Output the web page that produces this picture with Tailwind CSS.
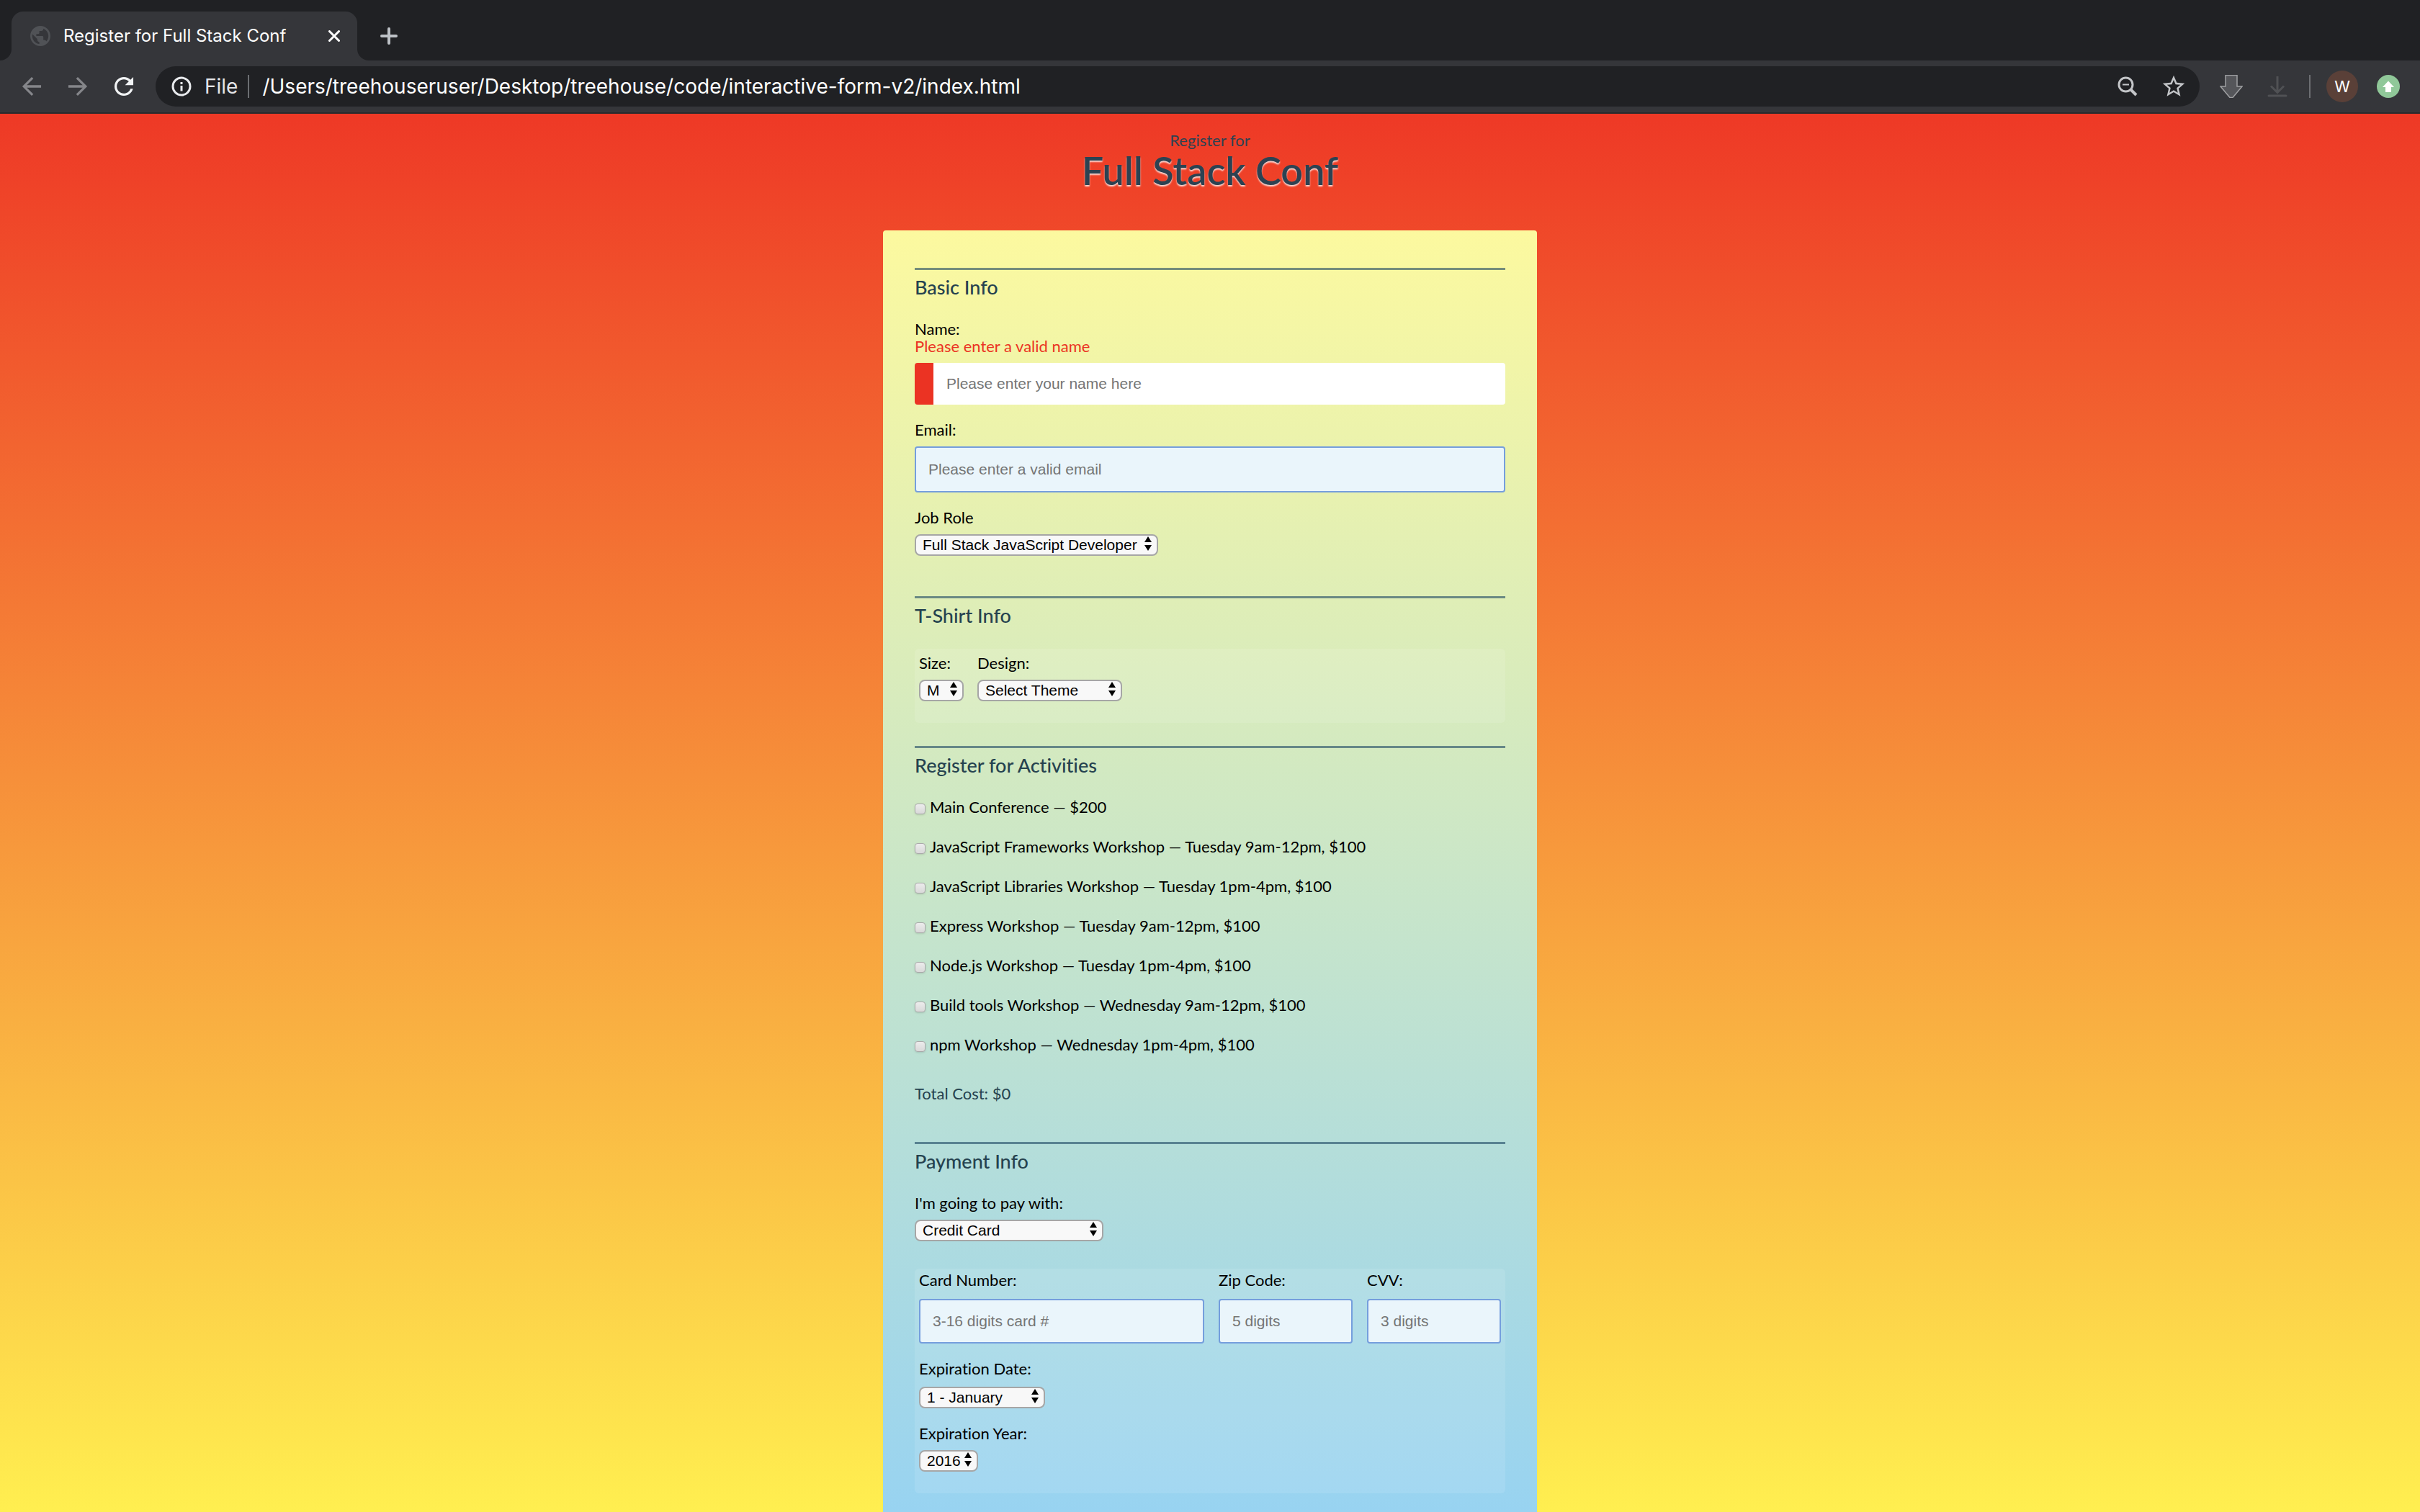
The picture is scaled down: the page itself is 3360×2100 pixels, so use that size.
<!DOCTYPE html>
<html lang="en">
<head>
<meta charset="utf-8">
<meta name="viewport" content="width=device-width, initial-scale=1">
<title>Register for Full Stack Conf</title>
<script src="https://cdn.jsdelivr.net/npm/@tailwindcss/browser@4"></script>
</head>
<body class="flex min-h-screen flex-col bg-[#202124] text-black">

<!-- Tab strip -->
<div class="flex h-[84px] items-end bg-[#202124] px-4 font-['Inter',sans-serif]">
  <div class="relative flex h-[68px] w-[480px] items-center rounded-t-2xl bg-[#35363a] pr-6 pl-[26px]">
    <svg class="absolute bottom-0 -left-4 size-4" viewBox="0 0 16 16" fill="#35363a" aria-hidden="true"><path d="M16 0v16H0A16 16 0 0 0 16 0z"/></svg>
    <svg class="absolute -right-4 bottom-0 size-4" viewBox="0 0 16 16" fill="#35363a" aria-hidden="true"><path d="M0 0v16h16A16 16 0 0 1 0 0z"/></svg>
    <svg class="size-7" viewBox="2 2 20 20" fill="#505256" aria-hidden="true"><path d="M12 2C6.48 2 2 6.48 2 12s4.48 10 10 10 10-4.48 10-10S17.52 2 12 2zm-1 17.93c-3.95-.49-7-3.85-7-7.93 0-.62.08-1.21.21-1.79L9 15v1c0 1.1.9 2 2 2v1.93zm6.9-2.54c-.26-.81-1-1.39-1.9-1.39h-1v-3c0-.55-.45-1-1-1H8v-2h2c.55 0 1-.45 1-1V7h2c1.1 0 2-.9 2-2v-.41c2.93 1.19 5 4.06 5 7.41 0 2.08-.8 3.97-2.1 5.39z"/></svg>
    <span class="ml-[18px] flex-1 text-2xl whitespace-nowrap text-white">Register for Full Stack Conf</span>
    <button type="button" aria-label="Close tab"><svg class="size-4" viewBox="0 0 16 16" fill="none" stroke="#fff" stroke-width="3" stroke-linecap="round"><path d="M1.5 1.5l13 13M14.5 1.5l-13 13"/></svg></button>
  </div>
  <button type="button" aria-label="New tab" class="ml-8 flex h-[68px] items-center"><svg class="size-6" viewBox="0 0 24 24" fill="none" stroke="#bdc1c6" stroke-width="4" stroke-linecap="round"><path d="M12 2v20M2 12h20"/></svg></button>
</div>

<!-- Toolbar -->
<div class="flex h-[74px] items-center border-b-2 border-[#28292c] bg-[#35363a] px-7 font-['Inter',sans-serif]">
  <div class="flex items-center gap-8">
    <button type="button" aria-label="Back"><svg class="size-8" viewBox="2.2 2.2 19.6 19.6" fill="#85868a"><path d="M20 11H7.83l5.59-5.59L12 4l-8 8 8 8 1.41-1.41L7.83 13H20v-2z"/></svg></button>
    <button type="button" aria-label="Forward"><svg class="size-8" viewBox="2.2 2.2 19.6 19.6" fill="#85868a"><path d="M12 4l-1.41 1.41L16.17 11H4v2h12.17l-5.58 5.59L12 20l8-8z"/></svg></button>
    <button type="button" aria-label="Reload"><svg class="size-8" viewBox="2.2 2.2 19.6 19.6" fill="#f1f3f4"><path d="M17.65 6.35C16.2 4.9 14.21 4 12 4c-4.42 0-7.99 3.58-7.99 8s3.57 8 7.99 8c3.73 0 6.84-2.55 7.73-6h-2.08c-.82 2.33-3.04 4-5.65 4-3.31 0-6-2.69-6-6s2.69-6 6-6c1.66 0 3.14.69 4.22 1.78L13 11h7V4l-2.35 2.35z"/></svg></button>
  </div>
  <div class="ml-7 flex h-14 flex-1 items-center rounded-full bg-[#202124] pr-5 pl-[22px]">
    <svg class="size-7" viewBox="0 0 28 28" fill="none" stroke="#e8eaed" stroke-width="3" aria-hidden="true"><circle cx="14" cy="14" r="12"/><path d="M14 13v7.500M14 8v3"/></svg>
    <label for="url" class="ml-[18px] text-[28px] text-[#e4e5e8]">File</label>
    <span class="ml-3.5 h-8 w-0.5 bg-[#6c6e72]"></span>
    <input id="url" type="text" value="/Users/treehouseruser/Desktop/treehouse/code/interactive-form-v2/index.html" class="ml-[18px] flex-1 bg-transparent text-[28px] text-white outline-none">
    <button type="button" aria-label="Zoom"><svg class="size-7" viewBox="0 0 28 28" fill="none" stroke="#c3c5c8" stroke-width="3"><circle cx="11.500" cy="11.500" r="9.500"/><path d="M18.500 18.500l7.500 7.500" stroke-width="4"/><path d="M7 11.500h9" stroke-width="2"/></svg></button>
    <button type="button" aria-label="Bookmark this page" class="ml-[34px]"><svg class="size-8" viewBox="1.5 1.500 21 21" fill="#c3c5c8"><path d="M22 9.240l-7.190-.62L12 2 9.190 8.630 2 9.240l5.460 4.730L5.820 21 12 17.270 18.180 21l-1.630-7.030L22 9.240zM12 15.400l-3.760 2.270 1-4.280-3.320-2.880 4.380-.38L12 6.100l1.710 4.040 4.380.38-3.320 2.880 1 4.280L12 15.400z"/></svg></button>
  </div>
  <button type="button" aria-label="Downloader" class="ml-7"><svg class="size-8" viewBox="0 0 32 32" fill="#55565a" stroke="#9fa0a2" stroke-width="1.500"><path d="M8 .5h16V16h7L18 31.500h-4L1 16h7z"/></svg></button>
  <button type="button" aria-label="Save" class="ml-8"><svg class="size-8" viewBox="0 0 32 32" fill="none" stroke="#505154" stroke-width="3"><path d="M16 2v22M7 15.500l9 9 9-9" /><path d="M4 29h24" stroke-linecap="round"/></svg></button>
  <span class="ml-7 h-8 w-0.5 bg-[#6c6e72]"></span>
  <button type="button" aria-label="Profile" class="ml-[22px] flex size-11 items-center justify-center rounded-full bg-[#5a4038] text-[22px] text-white">W</button>
  <button type="button" aria-label="Update" class="ml-[26px]"><svg class="size-8" viewBox="0 0 32 32"><circle cx="16" cy="16" r="16" fill="#90c899"/><path d="M16 8.500l8 8.500h-4v7h-8v-7H8z" fill="#fff"/></svg></button>
</div>

<!-- Page -->
<main class="flex flex-1 flex-col items-center bg-linear-to-b/srgb from-[#ee3926] to-[#ffef50] pt-[25px] font-['Lato','Noto_Sans',sans-serif] text-[22px] leading-6 [font-variant-ligatures:none]">
  <header class="text-center text-[#2c4252]">
    <p>Register for</p>
    <h1 class="mt-0.5 text-[54px] leading-14 font-semibold [text-shadow:0_2px_2px_rgba(255,255,255,0.8)]">Full Stack Conf</h1>
  </header>

  <form class="mt-[55px] w-full max-w-[908px] flex-1 rounded-t-sm bg-linear-to-b/srgb from-[#fcf99f] to-[#98d3f1] px-11 pt-[52px] pb-[26px]">

    <section class="border-t-3 border-[#1d4660]/60 pt-2">
      <h2 class="text-[27px] leading-8 font-medium text-[#25424f]">Basic Info</h2>
      <label for="name" class="mt-[30px] block">Name:</label>
      <p class="text-[#eb3323]">Please enter a valid name</p>
      <input id="name" type="text" placeholder="Please enter your name here" class="mt-[11px] block h-[58px] w-full rounded-sm border-l-[26px] border-[#eb3323] bg-white px-[18px] font-['Liberation_Sans',sans-serif] text-[21px] placeholder:text-[#757575]">
      <label for="mail" class="mt-[23px] block">Email:</label>
      <input id="mail" type="email" placeholder="Please enter a valid email" class="mt-[11px] block h-16 w-full rounded-sm border-2 border-[#759edd] bg-[#eaf5fb] px-[17px] font-['Liberation_Sans',sans-serif] text-[21px] placeholder:text-[#757575]">
      <label for="role" class="mt-[23px] block">Job Role</label>
      <div class="relative mt-[11px] w-[338px]">
        <select id="role" class="block h-[30px] w-full appearance-none rounded-lg border-2 border-[#a6a6a6] bg-[#f8f8f8] pl-[9px] font-['Liberation_Sans',sans-serif] text-[21px] leading-[26px]"><option>Full Stack JavaScript Developer</option></select>
        <svg class="pointer-events-none absolute top-[3px] right-[9px] h-5 w-2.5" viewBox="0 0 10 20" aria-hidden="true"><path d="M5 0l5 8H0zM0 12h10l-5 8z"/></svg>
      </div>
    </section>

    <section class="mt-14 border-t-3 border-[#1d4660]/60 pt-2">
      <h2 class="text-[27px] leading-8 font-medium text-[#25424f]">T-Shirt Info</h2>
      <div class="mt-[30px] flex gap-[19px] rounded-md bg-white/10 px-1.5 pt-2 pb-[30px]">
        <div>
          <label for="size" class="block">Size:</label>
          <div class="relative mt-[11px] w-[62px]">
            <select id="size" class="block h-[30px] w-full appearance-none rounded-lg border-2 border-[#a6a6a6] bg-[#f8f8f8] pl-[9px] font-['Liberation_Sans',sans-serif] text-[21px] leading-[26px]"><option>M</option></select>
            <svg class="pointer-events-none absolute top-[3px] right-[9px] h-5 w-2.5" viewBox="0 0 10 20" aria-hidden="true"><path d="M5 0l5 8H0zM0 12h10l-5 8z"/></svg>
          </div>
        </div>
        <div>
          <label for="design" class="block">Design:</label>
          <div class="relative mt-[11px] w-[201px]">
            <select id="design" class="block h-[30px] w-full appearance-none rounded-lg border-2 border-[#a6a6a6] bg-[#f8f8f8] pl-[9px] font-['Liberation_Sans',sans-serif] text-[21px] leading-[26px]"><option>Select Theme</option></select>
            <svg class="pointer-events-none absolute top-[3px] right-[9px] h-5 w-2.5" viewBox="0 0 10 20" aria-hidden="true"><path d="M5 0l5 8H0zM0 12h10l-5 8z"/></svg>
          </div>
        </div>
      </div>
    </section>

    <section class="mt-8 border-t-3 border-[#1d4660]/60 pt-2">
      <h2 class="text-[27px] leading-8 font-medium text-[#25424f]">Register for Activities</h2>
      <div class="mt-[30px] flex flex-col items-start gap-[31px]">
        <label class="flex items-center gap-1.5"><input type="checkbox" class="mt-1 size-[15px] appearance-none rounded-[4px] border border-[#a9a9a9] bg-linear-to-b from-[#ececec] to-[#d9d9d9] shadow-sm">Main Conference — $200</label>
        <label class="flex items-center gap-1.5"><input type="checkbox" class="mt-1 size-[15px] appearance-none rounded-[4px] border border-[#a9a9a9] bg-linear-to-b from-[#ececec] to-[#d9d9d9] shadow-sm">JavaScript Frameworks Workshop — Tuesday 9am-12pm, $100</label>
        <label class="flex items-center gap-1.5"><input type="checkbox" class="mt-1 size-[15px] appearance-none rounded-[4px] border border-[#a9a9a9] bg-linear-to-b from-[#ececec] to-[#d9d9d9] shadow-sm">JavaScript Libraries Workshop — Tuesday 1pm-4pm, $100</label>
        <label class="flex items-center gap-1.5"><input type="checkbox" class="mt-1 size-[15px] appearance-none rounded-[4px] border border-[#a9a9a9] bg-linear-to-b from-[#ececec] to-[#d9d9d9] shadow-sm">Express Workshop — Tuesday 9am-12pm, $100</label>
        <label class="flex items-center gap-1.5"><input type="checkbox" class="mt-1 size-[15px] appearance-none rounded-[4px] border border-[#a9a9a9] bg-linear-to-b from-[#ececec] to-[#d9d9d9] shadow-sm">Node.js Workshop — Tuesday 1pm-4pm, $100</label>
        <label class="flex items-center gap-1.5"><input type="checkbox" class="mt-1 size-[15px] appearance-none rounded-[4px] border border-[#a9a9a9] bg-linear-to-b from-[#ececec] to-[#d9d9d9] shadow-sm">Build tools Workshop — Wednesday 9am-12pm, $100</label>
        <label class="flex items-center gap-1.5"><input type="checkbox" class="mt-1 size-[15px] appearance-none rounded-[4px] border border-[#a9a9a9] bg-linear-to-b from-[#ececec] to-[#d9d9d9] shadow-sm">npm Workshop — Wednesday 1pm-4pm, $100</label>
      </div>
      <p class="mt-11 text-[#25424f]">Total Cost: $0</p>
    </section>

    <section class="mt-[55px] border-t-3 border-[#1d4660]/60 pt-2">
      <h2 class="text-[27px] leading-8 font-medium text-[#25424f]">Payment Info</h2>
      <label for="payment" class="mt-[30px] block">I'm going to pay with:</label>
      <div class="relative mt-[11px] w-[262px]">
        <select id="payment" class="block h-[30px] w-full appearance-none rounded-lg border-2 border-[#a6a6a6] bg-[#f8f8f8] pl-[9px] font-['Liberation_Sans',sans-serif] text-[21px] leading-[26px]"><option>Credit Card</option></select>
        <svg class="pointer-events-none absolute top-[3px] right-[9px] h-5 w-2.5" viewBox="0 0 10 20" aria-hidden="true"><path d="M5 0l5 8H0zM0 12h10l-5 8z"/></svg>
      </div>
      <div class="mt-[38px] rounded-md bg-white/10 px-1.5 pt-1 pb-[30px]">
        <div class="grid grid-cols-[1fr_186px_186px] gap-5">
          <div>
            <label for="cc" class="block">Card Number:</label>
            <input id="cc" type="text" placeholder="3-16 digits card #" class="mt-3.5 block h-[62px] w-full rounded-sm border-2 border-[#759edd] bg-[#eaf5fb] px-[17px] font-['Liberation_Sans',sans-serif] text-[21px] placeholder:text-[#757575]">
          </div>
          <div>
            <label for="zip" class="block">Zip Code:</label>
            <input id="zip" type="text" placeholder="5 digits" class="mt-3.5 block h-[62px] w-full rounded-sm border-2 border-[#759edd] bg-[#eaf5fb] px-[17px] font-['Liberation_Sans',sans-serif] text-[21px] placeholder:text-[#757575]">
          </div>
          <div>
            <label for="cvv" class="block">CVV:</label>
            <input id="cvv" type="text" placeholder="3 digits" class="mt-3.5 block h-[62px] w-full rounded-sm border-2 border-[#759edd] bg-[#eaf5fb] px-[17px] font-['Liberation_Sans',sans-serif] text-[21px] placeholder:text-[#757575]">
          </div>
        </div>
        <label for="exp-month" class="mt-[23px] block">Expiration Date:</label>
        <div class="relative mt-[13px] w-[175px]">
          <select id="exp-month" class="block h-[30px] w-full appearance-none rounded-lg border-2 border-[#a6a6a6] bg-[#f8f8f8] pl-[9px] font-['Liberation_Sans',sans-serif] text-[21px] leading-[26px]"><option>1 - January</option></select>
          <svg class="pointer-events-none absolute top-[3px] right-[9px] h-5 w-2.5" viewBox="0 0 10 20" aria-hidden="true"><path d="M5 0l5 8H0zM0 12h10l-5 8z"/></svg>
        </div>
        <label for="exp-year" class="mt-[23px] block">Expiration Year:</label>
        <div class="relative mt-[11px] w-[82px]">
          <select id="exp-year" class="block h-[30px] w-full appearance-none rounded-lg border-2 border-[#a6a6a6] bg-[#f8f8f8] pl-[9px] font-['Liberation_Sans',sans-serif] text-[21px] leading-[26px]"><option>2016</option></select>
          <svg class="pointer-events-none absolute top-[3px] right-[9px] h-5 w-2.5" viewBox="0 0 10 20" aria-hidden="true"><path d="M5 0l5 8H0zM0 12h10l-5 8z"/></svg>
        </div>
      </div>
    </section>
  </form>
</main>
</body>
</html>
